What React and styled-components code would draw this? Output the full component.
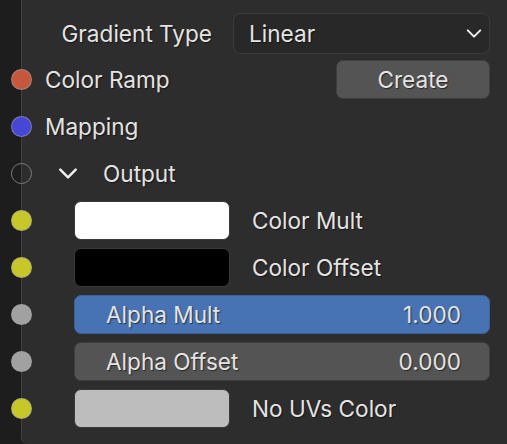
import React from 'react';
import styled, { createGlobalStyle } from 'styled-components';

const GlobalStyle = createGlobalStyle`
  html, body {
    margin: 0;
    height: 100%;
    background-color: #1d1d1d;
    overflow: hidden;
  }
  #root {
    height: 100%;
  }
`;

const Page = styled.div`
  display: flex;
  height: 100%;
  font-family: Inter, 'Noto Sans', sans-serif;
  font-size: 22.6px;
  color: #e4e4e4;
  text-shadow: 1px 1px 1px rgba(0, 0, 0, 0.55);
`;

const Gutter = styled.div`
  width: 21px;
  flex-shrink: 0;
  background-color: #1d1d1d;
`;

const Node = styled.div`
  flex: 1;
  box-sizing: border-box;
  height: 100%;
  padding: 9.6px 17px 0 0;
  background-color: #2d2d2d;
  border-left: 1px solid #414141;
  border-bottom-left-radius: 6px;
`;

const Row = styled.div`
  display: grid;
  grid-template-columns: 22px 1fr;
  align-items: center;
  height: 46.9px;
  margin-left: -11px;
`;

const Content = styled.div`
  display: flex;
  align-items: center;
  gap: ${(p) => p.$gap || 0}px;
  padding-left: ${(p) => p.$indent || 0}px;
  min-width: 0;
`;

const Socket = styled.span`
  box-sizing: border-box;
  width: 21px;
  height: 21px;
  border-radius: 50%;
  background-color: ${(p) => (p.$hollow ? 'transparent' : p.$color)};
  border: ${(p) => (p.$hollow ? '1.5px solid #7c7c7c' : '1.5px solid rgba(160, 160, 160, 0.6)')};
`;

const Label = styled.span`
  white-space: nowrap;
  width: ${(p) => (p.$width ? `${p.$width}px` : 'auto')};
  text-align: ${(p) => (p.$right ? 'right' : 'left')};
  flex-shrink: 0;
`;

const Spacer = styled.span`
  flex: 1;
`;

const Dropdown = styled.div`
  flex: 1;
  box-sizing: border-box;
  height: 41px;
  display: flex;
  align-items: center;
  justify-content: space-between;
  padding: 0 7px 0 15px;
  background-color: #282828;
  border: 1.5px solid #3b3b3b;
  border-radius: 8px;
`;

const Button = styled.button`
  box-sizing: border-box;
  width: 154px;
  height: 39px;
  font: inherit;
  color: inherit;
  text-shadow: inherit;
  background-color: #545454;
  border: 1.5px solid #3f3f3f;
  border-radius: 7px;
  padding: 0;
`;

const Swatch = styled.div`
  box-sizing: border-box;
  width: 156px;
  height: 39px;
  flex-shrink: 0;
  background-color: ${(p) => p.$color};
  border: 1.5px solid #3a3a3a;
  border-radius: 7px;
`;

const ValueField = styled.div`
  flex: 1;
  box-sizing: border-box;
  height: 39px;
  display: flex;
  align-items: center;
  justify-content: space-between;
  padding: 0 28px 0 31px;
  background-color: ${(p) => (p.$active ? '#4772b3' : '#545454')};
  border: 1.5px solid ${(p) => (p.$active ? '#3d5f94' : '#3f3f3f')};
  border-radius: 7px;
`;

const Chevron = ({ width = 18, height = 10 }) => (
  <svg width={width} height={height} viewBox="0 0 18 10" fill="none">
    <path d="M2 1.5 L9 8.5 L16 1.5" stroke="#f0f0f0" strokeWidth="2.2" strokeLinecap="round" strokeLinejoin="round" />
  </svg>
);

const swatchRows = {
  mult: { color: '#c7c729', swatch: '#ffffff', label: 'Color Mult' },
  offset: { color: '#c7c729', swatch: '#000000', label: 'Color Offset' },
  nouv: { color: '#c7c729', swatch: '#bdbdbd', label: 'No UVs Color' },
};

const SwatchRow = ({ item }) => (
  <Row>
    <Socket $color={item.color} />
    <Content $indent={41} $gap={22}>
      <Swatch $color={item.swatch} />
      <Label>{item.label}</Label>
    </Content>
  </Row>
);

const ValueRow = ({ label, value, active }) => (
  <Row>
    <Socket $color="#a1a1a1" />
    <Content $indent={41}>
      <ValueField $active={active}>
        <span>{label}</span>
        <span>{value}</span>
      </ValueField>
    </Content>
  </Row>
);

const App = () => {
  return (
    <>
      <GlobalStyle />
      <Page>
        <Gutter />
        <Node>
          <Row>
            <span />
            <Content $gap={21}>
              <Label $width={179} $right>Gradient Type</Label>
              <Dropdown>
                <span>Linear</span>
                <Chevron width={16} height={9} />
              </Dropdown>
            </Content>
          </Row>
          <Row>
            <Socket $color="#c4573c" />
            <Content $indent={12}>
              <Label>Color Ramp</Label>
              <Spacer />
              <Button>Create</Button>
            </Content>
          </Row>
          <Row>
            <Socket $color="#4747d6" />
            <Content $indent={12}>
              <Label>Mapping</Label>
            </Content>
          </Row>
          <Row>
            <Socket $hollow />
            <Content $indent={25} $gap={25}>
              <Chevron width={20} height={11} />
              <Label>Output</Label>
            </Content>
          </Row>
          <SwatchRow item={swatchRows.mult} />
          <SwatchRow item={swatchRows.offset} />
          <ValueRow label="Alpha Mult" value="1.000" active />
          <ValueRow label="Alpha Offset" value="0.000" />
          <SwatchRow item={swatchRows.nouv} />
        </Node>
      </Page>
    </>
  );
};

export default App;
